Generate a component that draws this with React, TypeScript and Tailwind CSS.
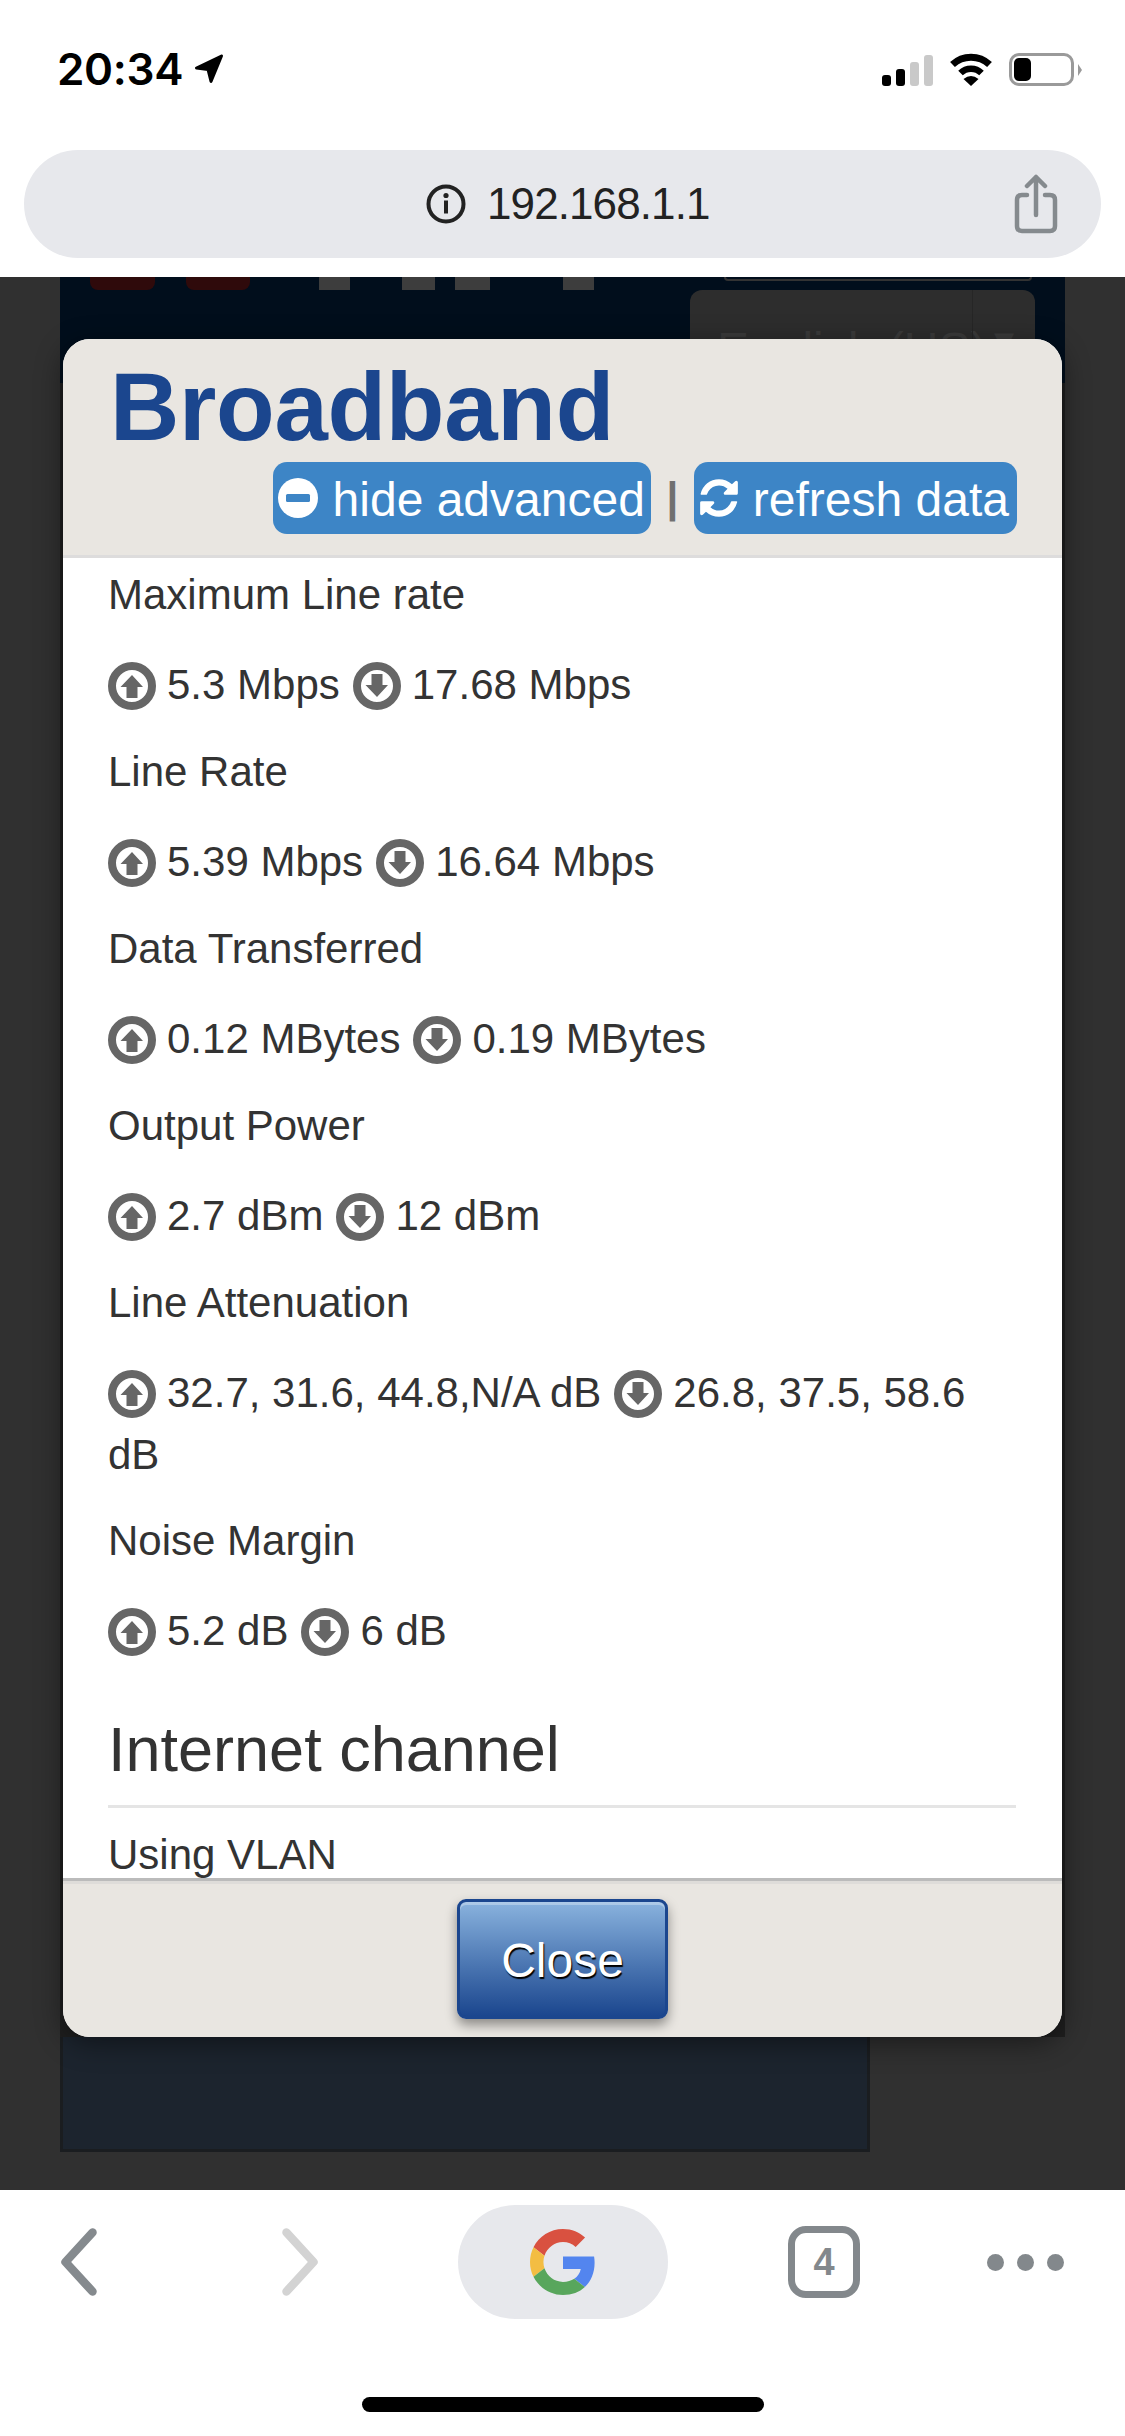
import React from "react";

const ArrowCircle = ({ down = false }: { down?: boolean }) => (
  <svg viewBox="0 0 48 48" className="inline-block w-[48px] h-[48px] align-[-11px]">
    <circle cx="24" cy="24" r="20" fill="none" stroke="#666666" strokeWidth="8" />
    <path
      d={down ? "M24 35 L12.5 23 H18.5 V12 H29.5 V23 H35 Z" : "M24 13 L35 25 H29.5 V36 H18.5 V25 H12.5 Z"}
      fill="#666666"
    />
  </svg>
);

const Label = ({ children }: { children: React.ReactNode }) => (
  <p className="leading-[62px] mb-[28px]">{children}</p>
);

const Value = ({ up, down, tail }: { up: string; down: string; tail?: string }) => (
  <p className={tail ? "leading-[62px] mb-[24px]" : "leading-[62px] mb-[25px]"}>
    <ArrowCircle />
    <span className="ml-[11px]">{up}</span>
    <span className="ml-[13px]" />
    <ArrowCircle down />
    <span className="ml-[11px]">{down}</span>
    {tail ? (
      <>
        <br />
        <span>{tail}</span>
      </>
    ) : null}
  </p>
);

const rows: [string, string, string, string?][] = [
  ["Maximum Line rate", "5.3 Mbps", "17.68 Mbps"],
  ["Line Rate", "5.39 Mbps", "16.64 Mbps"],
  ["Data Transferred", "0.12 MBytes", "0.19 MBytes"],
  ["Output Power", "2.7 dBm", "12 dBm"],
  ["Line Attenuation", "32.7, 31.6, 44.8,N/A dB", "26.8, 37.5, 58.6", "dB"],
  ["Noise Margin", "5.2 dB", "6 dB"],
];

export default function App() {
  return (
    <div className="relative w-[1125px] h-[2436px] overflow-hidden flex flex-col bg-white font-['Liberation_Sans',sans-serif]">
      {/* top browser chrome */}
      <header className="h-[277px] shrink-0 bg-white flex flex-col">
        <div className="h-[150px] shrink-0 flex items-start justify-between pl-[57px] pr-[43px] pt-[52px]">
          <div className="flex items-center gap-[11px] h-[34px]">
            <span className="font-['Inter',sans-serif] font-semibold text-[44px] leading-[34px] text-black tracking-[-0.3px]">20:34</span>
            <svg viewBox="0 0 30 30" className="w-[30px] h-[30px]">
              <path d="M27.5 2 L2.5 14 L14 15.5 L17 27.5 Z" fill="#000" stroke="#000" strokeWidth="3" strokeLinejoin="round" />
            </svg>
          </div>
          <div className="flex items-end h-[34px]">
            <div className="flex items-end gap-[5px] h-[32px] mr-[16px]">
              <div className="w-[9px] h-[11px] rounded-[3px] bg-black" />
              <div className="w-[9px] h-[17px] rounded-[3px] bg-black" />
              <div className="w-[9px] h-[24px] rounded-[3px] bg-[#c9c9c9]" />
              <div className="w-[9px] h-[31px] rounded-[3px] bg-[#c9c9c9]" />
            </div>
            <svg viewBox="0 0 44 33" className="w-[44px] h-[33px] mr-[16px]">
              <path d="M3.5 11.5 A 27 27 0 0 1 40.5 11.5" fill="none" stroke="#000" strokeWidth="7" />
              <path d="M11.5 20 A 15 15 0 0 1 32.5 20" fill="none" stroke="#000" strokeWidth="6.5" />
              <path d="M22 33 L14.5 26 Q22 20 29.5 26 Z" fill="#000" />
            </svg>
            <div className="w-[65px] h-[33px] rounded-[10px] border-[3px] border-[#9a9a9a] p-[2px] mr-[4px]">
              <div className="w-[17px] h-[23px] rounded-[5px] bg-black" />
            </div>
            <div className="w-0 h-0 mb-[10px] border-y-[6px] border-y-transparent border-l-[4px] border-l-[#9a9a9a]" />
          </div>
        </div>
        <div className="mx-[24px] h-[108px] shrink-0 rounded-[54px] bg-[#e7e8ec] flex items-center pl-[402px] pr-[43px]">
          <svg viewBox="0 0 40 40" className="w-[40px] h-[40px] shrink-0">
            <circle cx="20" cy="20" r="17.5" fill="none" stroke="#222" strokeWidth="4" />
            <circle cx="20" cy="11.5" r="2.6" fill="#222" />
            <rect x="18" y="16.5" width="4" height="13" fill="#222" />
          </svg>
          <span className="ml-[21px] text-[44px] leading-none text-[#222] tracking-[-0.9px]">192.168.1.1</span>
          <svg viewBox="0 0 44 60" className="w-[44px] h-[60px] ml-auto">
            <path d="M22 41 V3 M13 12 L22 3 L31 12" fill="none" stroke="#858a8e" strokeWidth="4.5" strokeLinecap="round" strokeLinejoin="round" />
            <path d="M13 21 H8 Q3 21 3 26 V52 Q3 57 8 57 H36 Q41 57 41 52 V26 Q41 21 36 21 H31" fill="none" stroke="#858a8e" strokeWidth="4.5" strokeLinecap="round" />
          </svg>
        </div>
      </header>

      {/* dimmed page */}
      <main className="h-[1913px] shrink-0 bg-[#303030] pl-[60px]">
        <div className="w-[1005px] h-[106px] bg-[#010e1c] overflow-hidden relative">
          <div className="flex items-start">
            <div className="w-[65px] h-[13px] ml-[30px] rounded-b-[8px] bg-[#2f0a0b]" />
            <div className="w-[64px] h-[13px] ml-[31px] rounded-b-[8px] bg-[#2f0a0b]" />
            <div className="w-[31px] h-[13px] ml-[69px] bg-[#3d3d3d]" />
            <div className="w-[33px] h-[13px] ml-[52px] bg-[#3d3d3d]" />
            <div className="w-[35px] h-[13px] ml-[20px] bg-[#3d3d3d]" />
            <div className="w-[31px] h-[13px] ml-[73px] bg-[#3d3d3d]" />
            <div className="w-[308px] h-[4px] ml-[130px] rounded-b-[8px] border-b-[2px] border-x-[2px] border-[#333333]" />
          </div>
          <div className="ml-[630px] w-[345px] h-[93px] rounded-[12px] bg-[#2d2d2d] flex">
            <div className="w-[282px] pl-[27px] pt-[32px] text-[48px] leading-[56px] text-[#3b3b3b] whitespace-nowrap">English (US)</div>
            <div className="flex-1 border-l border-[#262626] pt-[34px] text-center text-[34px] leading-none text-[#3b3b3b]">▼</div>
          </div>
        </div>
        <div className="w-[1005px] h-[1654px] bg-[#1f1f1f]" />
        <div className="w-[810px] h-[115px] bg-[#1c242e] border-[3px] border-t-0 border-[#1a1d20]" />
      </main>

      {/* bottom browser chrome */}
      <footer className="flex-1 bg-white flex flex-col">
        <div className="flex items-center h-[114px] mt-[15px] pl-[61px]">
          <svg viewBox="0 0 36 68" className="w-[36px] h-[68px] shrink-0">
            <path d="M31.5 4.5 L4.5 34 L31.5 63.5" fill="none" stroke="#858a8e" strokeWidth="8.5" strokeLinecap="round" strokeLinejoin="round" />
          </svg>
          <svg viewBox="0 0 36 68" className="w-[36px] h-[68px] shrink-0 ml-[185px]">
            <path d="M4.5 4.5 L31.5 34 L4.5 63.5" fill="none" stroke="#d3d3d3" strokeWidth="8.5" strokeLinecap="round" strokeLinejoin="round" />
          </svg>
          <div className="w-[210px] h-[114px] shrink-0 ml-[140px] rounded-[57px] bg-[#e7e8ec] flex items-center justify-center">
            <svg viewBox="0 0 48 48" className="w-[66px] h-[66px]">
              <path fill="#d95140" d="M24 9.5c3.54 0 6.71 1.22 9.21 3.6l6.85-6.85C35.9 2.38 30.47 0 24 0 14.62 0 6.51 5.38 2.56 13.22l7.98 6.19C12.43 13.72 17.74 9.5 24 9.5z" />
              <path fill="#5385ef" d="M46.98 24.55c0-1.57-.15-3.09-.38-4.55H24v9.02h12.94c-.58 2.96-2.26 5.48-4.78 7.18l7.73 6c4.51-4.18 7.09-10.36 7.09-17.65z" />
              <path fill="#f3bd42" d="M10.53 28.59c-.48-1.45-.76-2.99-.76-4.59s.27-3.14.76-4.59l-7.98-6.19C.92 16.46 0 20.12 0 24c0 3.88.92 7.54 2.56 10.78l7.97-6.19z" />
              <path fill="#58a65c" d="M24 48c6.48 0 11.93-2.13 15.89-5.81l-7.73-6c-2.15 1.45-4.92 2.3-8.16 2.3-6.26 0-11.57-4.22-13.47-9.91l-7.98 6.19C6.51 42.62 14.62 48 24 48z" />
            </svg>
          </div>
          <div className="w-[72px] h-[72px] shrink-0 ml-[120px] rounded-[18px] border-[7px] border-[#83888c] flex items-center justify-center text-[38px] leading-none font-bold text-[#83888c]">4</div>
          <div className="flex gap-[13px] shrink-0 ml-[127px]">
            <div className="w-[17px] h-[17px] rounded-full bg-[#83888c]" />
            <div className="w-[17px] h-[17px] rounded-full bg-[#83888c]" />
            <div className="w-[17px] h-[17px] rounded-full bg-[#83888c]" />
          </div>
        </div>
        <div className="mt-[78px] mx-auto w-[402px] h-[15px] rounded-full bg-black" />
      </footer>

      {/* modal dialog */}
      <div className="absolute left-[63px] top-[339px] w-[999px] h-[1698px] rounded-[27px] overflow-hidden flex flex-col bg-white shadow-[0_6px_28px_rgba(0,0,0,0.45)]">
        <div className="h-[219px] shrink-0 bg-[#e9e6e1] border-b-[3px] border-[#dddcdc] pt-[20px] px-[45px]">
          <h1 className="ml-[2px] text-[96px] leading-[96px] font-bold text-[#1b468e] tracking-[-0.3px]">Broadband</h1>
          <div className="flex justify-end items-center mt-[7px] text-[48px] leading-none">
            <div className="h-[72px] rounded-[14px] bg-[#3d85c6] flex items-center pl-[5px] pr-[6px] pt-[3px] text-white whitespace-nowrap">
              <svg viewBox="0 0 40 40" className="w-[40px] h-[40px] shrink-0 mr-[15px] -mt-[3px]">
                <circle cx="20" cy="20" r="20" fill="#fff" />
                <rect x="8" y="16" width="24" height="8" rx="1.5" fill="#3d85c6" />
              </svg>
              hide advanced
            </div>
            <span className="w-[43px] text-center text-[42px] font-bold text-[#707070]">|</span>
            <div className="h-[72px] rounded-[14px] bg-[#3d85c6] flex items-center pl-[3px] pr-[8px] pt-[3px] text-white whitespace-nowrap">
              <svg viewBox="0 0 1792 1792" className="w-[44px] h-[44px] shrink-0 mr-[12px] -mt-[3px]" fill="#fff">
                <path d="M1639 1056q0 5-1 7-64 268-268 434.5t-478 166.5q-146 0-282.5-55t-243.5-157l-129 129q-19 19-45 19t-45-19-19-45v-448q0-26 19-45t45-19h448q26 0 45 19t19 45-19 45l-137 137q71 66 161 102t187 36q134 0 250-65t186-179q11-17 53-117 8-23 30-23h192q13 0 22.5 9.5t9.5 22.5zm25-800v448q0 26-19 45t-45 19h-448q-26 0-45-19t-19-45 19-45l138-138q-148-137-349-137-134 0-250 65t-186 179q-11 17-53 117-8 23-30 23h-199q-13 0-22.5-9.5t-9.5-22.5v-7q65-268 270-434.5t480-166.5q146 0 284 55.5t245 156.5l130-129q19-19 45-19t45 19 19 45z" />
              </svg>
              refresh data
            </div>
          </div>
        </div>

        <div className="flex-1 min-h-0 overflow-hidden bg-white pt-[6px] pl-[45px] pr-[46px] text-[42px] text-[#333333]">
          {rows.map(([label, up, down, tail]) => (
            <React.Fragment key={label}>
              <Label>{label}</Label>
              <Value up={up} down={down} tail={tail} />
            </React.Fragment>
          ))}
          <h2 className="text-[63px] leading-[68px] mt-[53px] text-[#333333]">Internet channel</h2>
          <div className="h-[3px] bg-[#e5e5e5] mt-[22px] mb-[16px]" />
          <p className="leading-[62px]">Using VLAN</p>
        </div>

        <div className="h-[159px] shrink-0 bg-[#e9e6e1] border-t-[3px] border-[#bbbbbb] shadow-[inset_0_3px_0_#dedcd9] flex justify-center pt-[18px]">
          <button className="w-[211px] h-[120px] rounded-[9px] border-[3px] border-[#1b468e] bg-gradient-to-b from-[#8ab3de] to-[#1b468e] shadow-[0_6px_12px_rgba(0,0,0,0.4),inset_0_3px_0_rgba(255,255,255,0.3)] pt-[4px] text-white text-[48px] [text-shadow:1px_2px_1px_#000]">
            Close
          </button>
        </div>
      </div>
    </div>
  );
}
